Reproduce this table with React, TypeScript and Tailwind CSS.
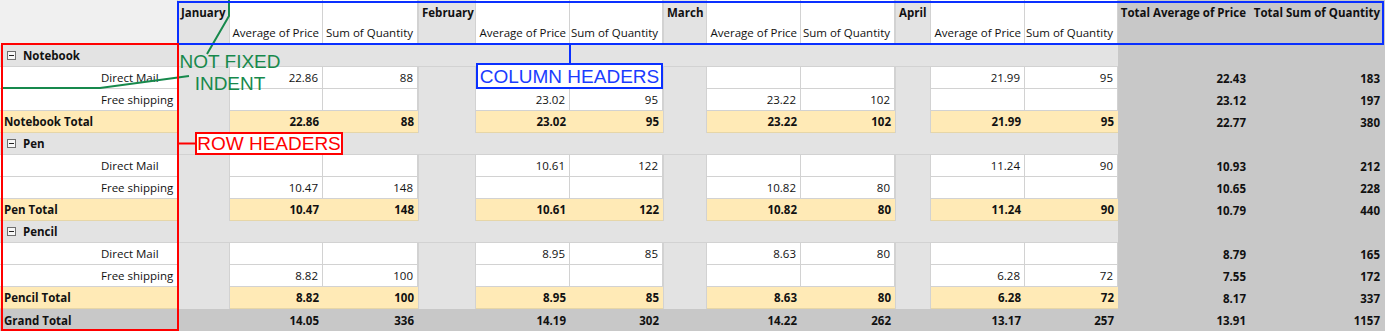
type Pair = [string, string] | null;

interface DataRow {
  label: string;
  vals: Pair[];
  tot: [string, string];
}

interface Group {
  name: string;
  rows: DataRow[];
  total: { vals: Pair[]; tot: [string, string] };
}

const months = ["January", "February", "March", "April"];

const groups: Group[] = [
  {
    name: "Notebook",
    rows: [
      { label: "Direct Mail", vals: [["22.86", "88"], null, null, ["21.99", "95"]], tot: ["22.43", "183"] },
      { label: "Free shipping", vals: [null, ["23.02", "95"], ["23.22", "102"], null], tot: ["23.12", "197"] },
    ],
    total: { vals: [["22.86", "88"], ["23.02", "95"], ["23.22", "102"], ["21.99", "95"]], tot: ["22.77", "380"] },
  },
  {
    name: "Pen",
    rows: [
      { label: "Direct Mail", vals: [null, ["10.61", "122"], null, ["11.24", "90"]], tot: ["10.93", "212"] },
      { label: "Free shipping", vals: [["10.47", "148"], null, ["10.82", "80"], null], tot: ["10.65", "228"] },
    ],
    total: { vals: [["10.47", "148"], ["10.61", "122"], ["10.82", "80"], ["11.24", "90"]], tot: ["10.79", "440"] },
  },
  {
    name: "Pencil",
    rows: [
      { label: "Direct Mail", vals: [null, ["8.95", "85"], ["8.63", "80"], null], tot: ["8.79", "165"] },
      { label: "Free shipping", vals: [["8.82", "100"], null, null, ["6.28", "72"]], tot: ["7.55", "172"] },
    ],
    total: { vals: [["8.82", "100"], ["8.95", "85"], ["8.63", "80"], ["6.28", "72"]], tot: ["8.17", "337"] },
  },
];

const grand = {
  vals: [["14.05", "336"], ["14.19", "302"], ["14.22", "262"], ["13.17", "257"]] as Pair[],
  tot: ["13.91", "1157"] as [string, string],
};

const cols =
  "grid grid-cols-[177px_53px_93px_95px_58px_94px_93px_44px_94px_94px_36px_94px_93px_131px_136px]";

const MinusBox = () => (
  <svg width="9" height="9" viewBox="0 0 9 9" className="shrink-0">
    <rect x="0.5" y="0.5" width="8" height="8" fill="#f7f7f7" stroke="#6e6e6e" />
    <line x1="2" y1="4.5" x2="7" y2="4.5" stroke="#222" />
  </svg>
);

const MonthGap = () => <div className="bg-[#e3e3e3] border-x border-[#d2d2d2]" />;

const ValueCells = ({ pair, kind }: { pair: Pair; kind: "item" | "total" | "grand" }) => {
  const bg =
    kind === "item"
      ? "bg-white border-r border-b border-[#d2d2d2]"
      : kind === "total"
      ? "bg-[#ffeab6] border-b border-[#e6d6a8] font-bold"
      : "bg-[#c8c8c8] font-bold";
  return (
    <>
      <div className={`${bg} flex items-center justify-end pr-[4px] pt-[1px]`}>{pair ? pair[0] : ""}</div>
      <div className={`${bg} flex items-center justify-end pr-[4px] pt-[1px]`}>{pair ? pair[1] : ""}</div>
    </>
  );
};

const TotalCells = ({ tot }: { tot?: [string, string] }) => (
  <>
    <div className="bg-[#c8c8c8] font-bold flex items-center justify-end pr-[3px] pt-[1px]">{tot ? tot[0] : ""}</div>
    <div className="bg-[#c8c8c8] font-bold flex items-center justify-end pr-[5px] pt-[1px]">{tot ? tot[1] : ""}</div>
  </>
);

const BodyRow = ({
  label,
  vals,
  tot,
  kind,
}: {
  label: string;
  vals: Pair[];
  tot: [string, string];
  kind: "item" | "total" | "grand";
}) => {
  const head =
    kind === "item"
      ? "bg-white border-b border-[#d2d2d2] pl-[101px]"
      : kind === "total"
      ? "bg-[#ffeab6] border-b border-[#e6d6a8] font-bold pl-[4px]"
      : "bg-[#c8c8c8] font-bold pl-[4px]";
  return (
    <div className={`${cols} h-[22px]`}>
      <div className={`${head} flex items-center pt-[1px]`}>{label}</div>
      {vals.map((p, i) => (
        <div key={i} className="contents">
          {kind === "grand" ? <div className="bg-[#c8c8c8]" /> : <MonthGap />}
          <ValueCells pair={p} kind={kind} />
        </div>
      ))}
      <TotalCells tot={tot} />
    </div>
  );
};

const GroupRow = ({ name }: { name: string }) => (
  <div className={`${cols} h-[22px]`}>
    <div className="col-span-13 bg-[#e3e3e3] border-b border-[#d2d2d2] flex items-center gap-[7px] pl-[7px] font-bold">
      <MinusBox />
      <span className="pt-[1px]">{name}</span>
    </div>
    <TotalCells />
  </div>
);

export default function App() {
  return (
    <div className="relative w-[1385px] h-[331px] overflow-hidden bg-white text-[11.5px] text-[#111] font-['Open_Sans','Liberation_Sans',sans-serif]">
      <div className={`${cols} h-[45px]`}>
        <div className="bg-[#f0f0f0]" />
        {months.map((m) => (
          <div key={m} className="contents">
            <div className="bg-[#e3e3e3] border-x border-[#d2d2d2] font-bold pl-[3px] pt-[4px]">{m}</div>
            <div className="bg-white border-r border-b border-[#d2d2d2] flex items-end justify-end pr-[3px] pb-[3px]">
              Average of Price
            </div>
            <div className="bg-white border-r border-b border-[#d2d2d2] flex items-end justify-end pr-[4px] pb-[3px]">
              Sum of Quantity
            </div>
          </div>
        ))}
        <div className="bg-[#c8c8c8] font-bold flex justify-end pr-[3px] pt-[4px]">Total Average of Price</div>
        <div className="bg-[#c8c8c8] font-bold flex justify-end pr-[5px] pt-[4px]">Total Sum of Quantity</div>
      </div>

      {groups.map((g) => (
        <div key={g.name}>
          <GroupRow name={g.name} />
          {g.rows.map((r) => (
            <BodyRow key={r.label} label={r.label} vals={r.vals} tot={r.tot} kind="item" />
          ))}
          <BodyRow label={`${g.name} Total`} vals={g.total.vals} tot={g.total.tot} kind="total" />
        </div>
      ))}
      <BodyRow label="Grand Total" vals={grand.vals} tot={grand.tot} kind="grand" />

      {/* annotation overlays */}
      <svg className="absolute inset-0 pointer-events-none" width="1385" height="331">
        <line x1="570" y1="44" x2="570" y2="64" stroke="#0a30ff" strokeWidth="2" />
        <line x1="179" y1="143.5" x2="196" y2="143.5" stroke="#ff0000" strokeWidth="2" />
        <polyline points="229,0 229,16 207,54" fill="none" stroke="#17894c" strokeWidth="2" />
        <polyline points="189,76 100,88 2,88" fill="none" stroke="#17894c" strokeWidth="2" />
      </svg>
      <div className="absolute left-[177px] top-[1px] w-[1207px] h-[44px] border-2 border-[#0a30ff] pointer-events-none" />
      <div className="absolute left-[1px] top-[43px] w-[178px] h-[288px] border-2 border-[#ff0000] pointer-events-none" />
      <div className="absolute left-[476px] top-[63px] w-[187px] h-[26px] border-2 border-[#0a30ff] bg-white flex items-center justify-center text-[19px] leading-none text-[#1a3cff] font-['Liberation_Sans',Arial,sans-serif]">
        COLUMN HEADERS
      </div>
      <div className="absolute left-[195px] top-[132px] w-[148px] h-[23px] border-2 border-[#ff0000] bg-white flex items-center justify-center text-[19px] leading-none text-[#ff0000] font-['Liberation_Sans',Arial,sans-serif]">
        ROW HEADERS
      </div>
      <div className="absolute left-[178px] top-[51px] w-[104px] text-center text-[19px] leading-[22px] text-[#17894c] font-['Liberation_Sans',Arial,sans-serif]">
        NOT FIXED
        <br />
        INDENT
      </div>
    </div>
  );
}
